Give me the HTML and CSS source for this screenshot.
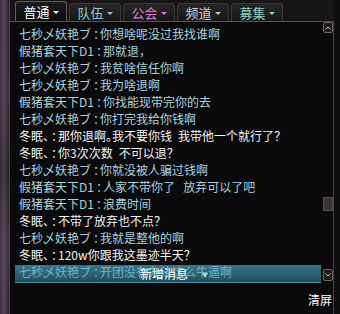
FILE: index.html
```html
<!DOCTYPE html>
<html lang="zh">
<head>
<meta charset="utf-8">
<link rel="stylesheet" href="styles.css">
</head>
<body>
<div class="screen">
  <div class="side"></div>
  <div class="main">
    <div class="tabs">
      <div class="tab active"><span>普通</span><i class="arrow"></i></div>
      <div class="tab t-team"><span>队伍</span><i class="arrow"></i></div>
      <div class="tab t-guild"><span>公会</span><i class="arrow"></i></div>
      <div class="tab t-chan"><span>频道</span><i class="arrow"></i></div>
      <div class="tab t-recruit"><span>募集</span><i class="arrow"></i></div>
    </div>
    <div class="frame">
      <div class="chat">
        <div class="lines">
          <div class="line c">七秒乄妖艳ブ<span class="sep">：</span>你想啥呢没过我找谁啊</div>
          <div class="line c">假猪套天下D1<span class="sep">：</span>那就退，</div>
          <div class="line c">七秒乄妖艳ブ<span class="sep">：</span>我贫啥信任你啊</div>
          <div class="line c">七秒乄妖艳ブ<span class="sep">：</span>我为啥退啊</div>
          <div class="line c">假猪套天下D1<span class="sep">：</span>你找能现带完你的去</div>
          <div class="line c">七秒乄妖艳ブ<span class="sep">：</span>你打完我给你钱啊</div>
          <div class="line w">冬眠、<span class="sep">：</span>那你退啊。我不要你钱&ensp;我带他一个就行了？</div>
          <div class="line w">冬眠、<span class="sep">：</span>你3次次数&ensp;不可以退？</div>
          <div class="line c">七秒乄妖艳ブ<span class="sep">：</span>你就没被人骗过钱啊</div>
          <div class="line c">假猪套天下D1<span class="sep">：</span>人家不带你了&ensp;&thinsp;放弃可以了吧</div>
          <div class="line c">假猪套天下D1<span class="sep">：</span>浪费时间</div>
          <div class="line w">冬眠、<span class="sep">：</span>不带了放弃也不点？</div>
          <div class="line c">七秒乄妖艳ブ<span class="sep">：</span>我就是整他的啊</div>
          <div class="line w">冬眠、<span class="sep">：</span>120w你跟我这墨迹半天？</div>
          <div class="line c">七秒乄妖艳ブ<span class="sep">：</span>开团没有办法这么牛逼啊</div>
        </div>
        <div class="scroll">
          <div class="sbtn up"><svg width="6" height="4" viewBox="0 0 6 4"><polyline points="0.5,3.5 3,1 5.5,3.5" fill="none" stroke="#cfc6bc" stroke-width="1"/></svg></div>
          <div class="track"><div class="thumb"></div></div>
          <div class="sbtn down"><svg width="6" height="4" viewBox="0 0 6 4"><polyline points="0.5,0.5 3,3 5.5,0.5" fill="none" stroke="#cfc6bc" stroke-width="1"/></svg></div>
        </div>
      </div>
      <div class="foot">清屏</div>
      <div class="newbar"><span>新增消息</span><i class="down-tri"></i></div>
    </div>
  </div>
  <div class="rest"></div>
</div>
</body>
</html>
```
FILE: styles.css
```css
html, body {
  margin: 0;
  padding: 0;
}
body {
  width: 340px;
  height: 314px;
  overflow: hidden;
  background: #0c0b0d;
  font-family: "Noto Sans CJK SC", "Noto Sans CJK JP", sans-serif;
}
.screen {
  display: flex;
  height: 314px;
}
.side {
  width: 9px;
  background:
    linear-gradient(180deg, rgba(0,0,0,0) 0%, rgba(90,70,90,0.25) 30%, rgba(0,0,0,0.15) 55%, rgba(110,90,110,0.25) 80%, rgba(0,0,0,0) 100%),
    linear-gradient(90deg, #3a2c38 0%, #56465a 45%, #3e3040 75%, #2a2028 100%);
}
.main {
  width: 325px;
  box-sizing: border-box;
  border-left: 1px solid #4e4842;
  display: flex;
  flex-direction: column;
}
.rest {
  flex: 1;
  background: #0f0d0f;
}
.tabs {
  height: 21px;
  display: flex;
  align-items: flex-end;
  gap: 2px;
  padding-left: 5px;
  background: #161416;
}
.tab {
  width: 52px;
  height: 18px;
  box-sizing: border-box;
  border: 1px solid #3c3a38;
  border-bottom: none;
  border-radius: 3px 3px 0 0;
  background: linear-gradient(180deg, #262626, #181818);
  display: flex;
  align-items: center;
  justify-content: center;
  gap: 3px;
  font-size: 13px;
  line-height: 1;
}
.tab.active {
  height: 20px;
  border-color: #625c56;
  background: linear-gradient(180deg, #1c1a1c, #0c0b0e);
  color: #ffffff;
}
.t-team { color: #94c6d8; }
.t-guild { color: #d67ad8; }
.t-chan { color: #dcc4cc; }
.t-recruit { color: #8cd0cc; }
.arrow {
  width: 0;
  height: 0;
  border-left: 3px solid transparent;
  border-right: 3px solid transparent;
  border-top: 3px solid currentColor;
  margin-top: 1px;
}
.frame {
  flex: 1;
  position: relative;
  border-top: 1px solid #57524c;
  border-right: 1px solid #4a4540;
  background: #0a090c;
  display: flex;
  flex-direction: column;
}
.chat {
  display: flex;
  height: 259px;
}
.lines {
  flex: 1;
  padding: 3px 0 0 9px;
}
.line {
  height: 17px;
  line-height: 17px;
  font-size: 12px;
  white-space: nowrap;
  font-feature-settings: "halt" 1;
}
.sep {
  margin: 0 1px 0 2px;
}
.c { color: #a9d3df; }
.w { color: #f4f4f4; }
.scroll {
  width: 10px;
  display: flex;
  flex-direction: column;
}
.sbtn {
  box-sizing: border-box;
  border: 1px solid #6c645c;
  border-radius: 2px;
  background: #1c1a18;
  display: flex;
  align-items: center;
  justify-content: center;
}
.sbtn.up { height: 11px; }
.sbtn.down { height: 12px; }
.track { flex: 1; }
.thumb {
  height: 14px;
  margin-top: 164px;
  box-sizing: border-box;
  background: #3a3532;
  border: 1px solid #5c544e;
}
.foot {
  display: flex;
  justify-content: flex-end;
  margin-top: 9px;
  padding-right: 1px;
  height: 20px;
  line-height: 20px;
  font-size: 12px;
  color: #ffffff;
}
.newbar {
  position: absolute;
  left: 5px;
  top: 243px;
  width: 306px;
  height: 18px;
  box-sizing: border-box;
  padding-left: 12px;
  background: linear-gradient(180deg, rgba(85,178,204,0.64), rgba(45,128,150,0.58));
  border-bottom: 1px solid rgba(120,200,220,0.35);
  display: flex;
  align-items: center;
  justify-content: center;
  gap: 14px;
  color: #ffffff;
  font-size: 12px;
  line-height: 1;
}
.down-tri {
  width: 0;
  height: 0;
  border-left: 3px solid transparent;
  border-right: 3px solid transparent;
  border-top: 5px solid #bccdd5;
  margin-top: 3px;
}
```
